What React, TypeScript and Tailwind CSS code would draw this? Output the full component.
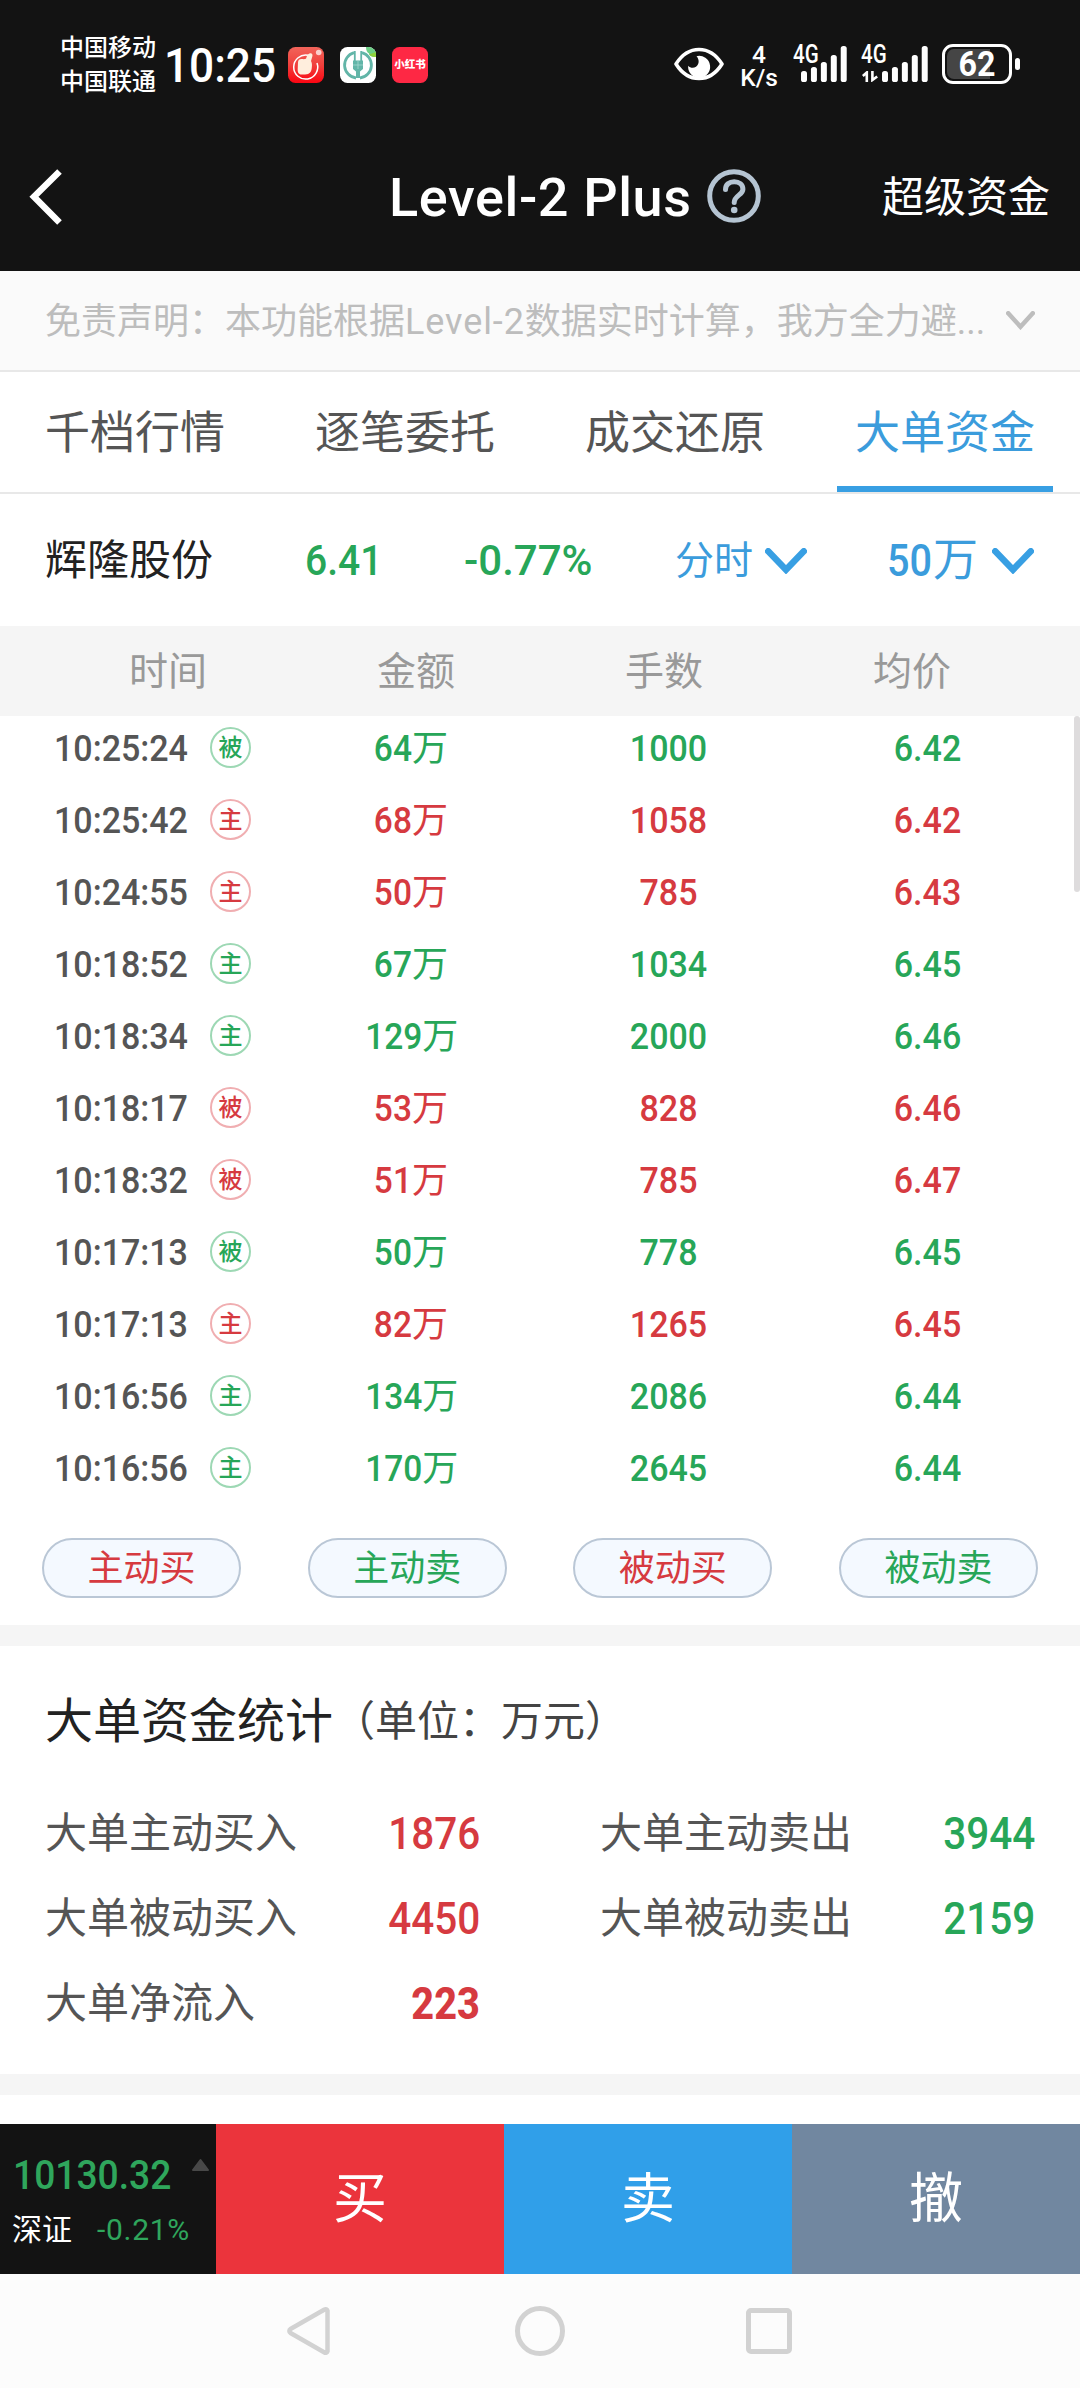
import React from "react";

type Tone = "red" | "green";

const TEXT: Record<Tone, string> = { red: "text-[#d63a40]", green: "text-[#27a658]" };
const RING: Record<Tone, string> = { red: "border-[#f0aeb1]", green: "border-[#9dd8b4]" };

const TRADES: [string, string, string, string, string, Tone][] = [
  ["10:25:24", "被", "64", "1000", "6.42", "green"],
  ["10:25:42", "主", "68", "1058", "6.42", "red"],
  ["10:24:55", "主", "50", "785", "6.43", "red"],
  ["10:18:52", "主", "67", "1034", "6.45", "green"],
  ["10:18:34", "主", "129", "2000", "6.46", "green"],
  ["10:18:17", "被", "53", "828", "6.46", "red"],
  ["10:18:32", "被", "51", "785", "6.47", "red"],
  ["10:17:13", "被", "50", "778", "6.45", "green"],
  ["10:17:13", "主", "82", "1265", "6.45", "red"],
  ["10:16:56", "主", "134", "2086", "6.44", "green"],
  ["10:16:56", "主", "170", "2645", "6.44", "green"],
];

/** Narrow numerals. */
function Num({ children, className = "" }: { children: React.ReactNode; className?: string }) {
  return <span className={`inline-block font-medium ${className}`}>{children}</span>;
}

function Chevron({ w, h, stroke, color }: { w: number; h: number; stroke: number; color: string }) {
  const p = stroke / 2;
  return (
    <svg className="shrink-0" width={w} height={h} viewBox={`0 0 ${w} ${h}`} fill="none" stroke={color} strokeWidth={stroke} strokeLinecap="round">
      <path d={`M${p} ${p} L${w / 2} ${h - p - 1} L${w - p} ${p}`} />
    </svg>
  );
}

const BARS = [11, 15, 20, 27, 36];

function SignalBars() {
  return (
    <svg width="46" height="36" viewBox="0 0 46 36" fill="#fff">
      {BARS.map((h, i) => (
        <rect key={i} x={i * 9.93} y={36 - h} width="6" height={h} rx="2.6" />
      ))}
    </svg>
  );
}

function StatusBar() {
  return (
    <div className="flex h-[126px] items-start text-white">
      <div className="ml-[60px] mt-[31px] w-[97px] shrink-0 text-[24px] leading-[34px] font-medium">
        <div>中国移动</div>
        <div>中国联通</div>
      </div>
      <div className="ml-[7px] mt-[42px] w-[124px] shrink-0 whitespace-nowrap text-[48px] leading-[48px]">
        <span className="inline-block origin-left scale-x-[0.92] font-medium">10:25</span>
      </div>
      <svg className="mt-[47px] shrink-0" width="36" height="36" viewBox="0 0 36 36">
        <defs>
          <linearGradient id="redApp" x1="0" y1="0" x2="0" y2="1">
            <stop offset="0" stopColor="#f2645a" />
            <stop offset="0.5" stopColor="#f0403c" />
            <stop offset="1" stopColor="#fb0512" />
          </linearGradient>
        </defs>
        <rect width="36" height="36" rx="7.5" fill="url(#redApp)" />
        <path d="M20 8.3A12 12 0 1 0 29 16" fill="none" stroke="#fff" strokeWidth="1.5" />
        <path d="M10 15.500c0-3 2-3.800 4-3.500 1.500.2 2.500.2 4-.2 1-3 1.500-5 4-5.500 2-.3 3 1 2.300 3.200l-1.300 4.500c1 2 1.200 4 .8 6.500-.3 4-1.800 7-6.800 7h-3.500C10.500 27.500 9.500 25 9.700 22z" fill="#ffeedd" />
        <circle cx="30.700" cy="5.500" r="2.800" fill="#fbd0cc" />
      </svg>
      <svg className="ml-[16px] mt-[47px] shrink-0" width="36" height="36" viewBox="0 0 36 36">
        <defs>
          <clipPath id="bankClip"><rect width="36" height="36" rx="7.500" /></clipPath>
        </defs>
        <g clipPath="url(#bankClip)">
          <rect width="36" height="36" fill="#fff" />
          <path d="M26 0h10v10c-5 0-6.500-1.500-7-3.500C27 5.500 26 3 26 0z" fill="#6ccf86" />
          <path d="M29 7.500c2 2 4.500 2.500 7 2.500V5z" fill="#8fd13a" />
        </g>
        <path d="M14 5.600A13 13 0 0 0 16 31M22 5.600A13 13 0 0 1 20 31" fill="none" stroke="#62b5a8" strokeWidth="2.800" />
        <path d="M14.800 4v10M21.200 4v10" stroke="#62b5a8" strokeWidth="1.800" />
        <path d="M13 13.500h10V22l-3 2.500v6.500h-4v-6.500L13 22z" fill="#62b5a8" />
        <path d="M18 13v9M13 18h10" stroke="#a5d8d0" strokeWidth="0.800" />
      </svg>
      <div className="ml-[16px] mt-[47px] flex h-[36px] w-[36px] shrink-0 items-center justify-center rounded-[7.5px] bg-[#fe2844] text-white">
        <span className="whitespace-nowrap text-[10.5px] leading-none font-black">小红书</span>
      </div>
      <svg className="ml-[246px] mt-[47px] shrink-0" width="50" height="34" viewBox="0 0 50 34">
        <path d="M2 17C8 7.500 16 2.500 25 2.500S42 7.500 48 17C42 26.500 34 31.500 25 31.500S8 26.500 2 17z" fill="none" stroke="#fff" strokeWidth="3.600" strokeLinejoin="round" />
        <path d="M22.500 9.200a11 11 0 1 1-8.300 9.500c2 2.300 5.300 2.800 7.800 1 3.300-2.400 3.600-7 .5-10.500z" fill="#fff" />
      </svg>
      <p className="ml-[15px] mt-[43px] w-[40px] shrink-0 text-center text-[24.500px] leading-[23px] font-medium">
        4<br />K/s
      </p>
      <div className="relative ml-[14px] mt-[46px] h-[36px] w-[54px] shrink-0">
        <div className="flex justify-end"><SignalBars /></div>
        <span className="absolute left-0 -top-px origin-left scale-x-[0.82] text-[25px] leading-[20px] font-medium">4G</span>
      </div>
      <div className="relative ml-[14px] mt-[46px] h-[36px] w-[67px] shrink-0">
        <div className="flex justify-end"><SignalBars /></div>
        <span className="absolute left-0 -top-px origin-left scale-x-[0.82] text-[25px] leading-[20px] font-medium">4G</span>
        <svg className="absolute bottom-0 left-[1px]" width="16" height="11" viewBox="0 0 16 11" fill="none" stroke="#fff" strokeWidth="2.600">
          <path d="M0.800 5 4.800 1.500V11M10.400 0V9l4.800-3.500" />
        </svg>
      </div>
      <div className="relative ml-[14px] mt-[44px] flex h-[40px] w-[70px] shrink-0 items-center justify-center rounded-[11px] border-[3px] border-white p-[3px]">
        <div className="absolute left-[2px] top-[2px] h-[30px] w-[43px] rounded-l-[7px] bg-[#454545]" />
        <span className="relative scale-x-[0.92] text-[35px] leading-none font-bold">62</span>
      </div>
      <div className="ml-[3px] mt-[58px] h-[12px] w-[5px] shrink-0 rounded-[2.500px] bg-white" />
    </div>
  );
}

function TitleBar() {
  return (
    <div className="flex h-[145px] items-start text-white">
      <svg className="ml-[28px] mt-[43px] shrink-0" width="36" height="56" viewBox="0 0 36 56" fill="none" stroke="#fff" strokeWidth="6.500">
        <path d="M31.500 2.500 6 27.800 31.500 53.500" />
      </svg>
      <h1 className="ml-[325px] mt-[42px] w-[318px] shrink-0 whitespace-nowrap text-[54px] leading-[60px] font-medium tracking-[0.6px]">Level-2 Plus</h1>
      <svg className="mt-[43px] shrink-0" width="54" height="54" viewBox="0 0 54 54" fill="none" stroke="#b5c4d2">
        <circle cx="27" cy="27" r="24.300" strokeWidth="5" />
        <path d="M18.500 20.500c0-5 3.800-7.800 8.700-7.800s8.700 3 8.700 7.500c0 5.800-8.700 6.300-8.700 13.300" strokeWidth="5" strokeLinecap="round" />
        <circle cx="27.200" cy="41" r="3.300" fill="#b5c4d2" stroke="none" />
      </svg>
      <span className="ml-[121px] mt-[42px] whitespace-nowrap text-[42px] leading-[60px]">超级资金</span>
    </div>
  );
}

const TABS = ["千档行情", "逐笔委托", "成交还原", "大单资金"];

function Tabs() {
  return (
    <div className="grid h-[122px] grid-cols-4 border-b-2 border-[#e8e8e8] text-[45px] leading-[60px] text-[#555]">
      {TABS.map((t, i) => (
        <div
          key={t}
          className={
            i === 3
              ? "mx-[27px] flex items-center justify-center border-b-[6px] border-[#389fe3] pt-[10px] text-[#3b9cdc]"
              : "mx-[27px] flex items-center justify-center pt-[4px]"
          }
        >
          <span className="whitespace-nowrap">{t}</span>
        </div>
      ))}
    </div>
  );
}

function StockRow() {
  return (
    <div className="flex h-[132px] items-center whitespace-nowrap pt-[2px] leading-[60px]">
      <span className="ml-[45px] w-[260px] text-[42px] text-[#222]">辉隆股份</span>
      <Num className="w-[159px] origin-left scale-x-[0.93] text-[42px] text-[#27a658]">6.41</Num>
      <Num className="w-[211px] origin-left text-[42px] text-[#27a658]">-0.77%</Num>
      <div className="flex w-[212px] items-center text-[39px] text-[#3b9cdc]">
        <span className="w-[90px]">分时</span>
        <Chevron w={42} h={26} stroke={6.5} color="#389fe3" />
      </div>
      <div className="flex items-center text-[45px] text-[#3b9cdc]">
        <Num className="w-[46px] origin-left scale-x-[0.88]">50</Num>
        <span className="w-[59px]">万</span>
        <Chevron w={42} h={26} stroke={6.5} color="#389fe3" />
      </div>
    </div>
  );
}

function TradeTable() {
  return (
    <section>
      <div className="grid h-[90px] grid-cols-4 items-center bg-[#f5f5f5] px-[44px] pt-[2px] text-center text-[39px] leading-[60px] text-[#999]">
        <span>时间</span>
        <span>金额</span>
        <span>手数</span>
        <span>均价</span>
      </div>
      <div className="relative h-[790px] overflow-hidden">
        <div className="-mt-[3px]">
          {TRADES.map(([time, kind, amount, lots, price, tone], i) => (
            <div
              key={i}
              className={`grid h-[72px] grid-cols-[280px_259px_259px_259px] items-center text-center text-[36px] leading-[50px] ${TEXT[tone]}`}
            >
              <div className="flex items-center pl-[54px] text-[#555]">
                <Num className="w-[156px] origin-left scale-x-[0.945] text-left">{time}</Num>
                <span className={`mb-[3px] flex h-[41px] w-[41px] shrink-0 items-center justify-center rounded-full border-2 pt-px text-[24px] leading-none font-medium ${RING[tone]} ${TEXT[tone]}`}>
                  {kind}
                </span>
              </div>
              <div className="flex justify-center">
                <Num className="origin-right scale-x-[0.93]">{amount}</Num>
                <span>万</span>
              </div>
              <Num className="scale-x-[0.945]">{lots}</Num>
              <Num className="scale-x-[0.945]">{price}</Num>
            </div>
          ))}
        </div>
        <div className="absolute right-0 top-0 h-[176px] w-[6px] rounded-[3px] bg-[#dedcdd]" />
      </div>
    </section>
  );
}

const FILTERS: [string, Tone][] = [["主动买", "red"], ["主动卖", "green"], ["被动买", "red"], ["被动卖", "green"]];

function Filters() {
  return (
    <div className="flex h-[119px] items-start justify-between px-[42px] pt-[32px]">
      {FILTERS.map(([label, tone]) => (
        <button
          key={label}
          className={`flex h-[60px] w-[199px] items-center justify-center rounded-full border-2 border-[#bac7d6] bg-[#f4f9ff] pt-px text-[36px] leading-[54px] ${TEXT[tone]}`}
        >
          {label}
        </button>
      ))}
    </div>
  );
}

const STATS: [string, string, Tone, boolean][] = [
  ["大单主动买入", "1876", "red", false],
  ["大单主动卖出", "3944", "green", false],
  ["大单被动买入", "4450", "red", false],
  ["大单被动卖出", "2159", "green", false],
  ["大单净流入", "223", "red", true],
];

function Summary() {
  return (
    <section className="h-[428px] px-[45px] pt-[46px]">
      <h2 className="flex items-center whitespace-nowrap leading-[60px]">
        <span className="text-[48px] text-[#222]">大单资金统计</span>
        <span className="text-[42px] text-[#444]">（单位：万元）</span>
      </h2>
      <div className="mt-[39px] grid grid-cols-[435px_435px] gap-x-[120px]">
        {STATS.map(([label, value, tone, bold]) => (
          <div key={label} className="flex h-[85px] items-center justify-between">
            <span className="text-[42px] leading-[60px] text-[#555]">{label}</span>
            {bold ? (
              <span className={`origin-right scale-x-[0.88] text-[45px] leading-[60px] font-extrabold ${TEXT[tone]}`}>{value}</span>
            ) : (
              <Num className={`origin-right scale-x-[0.9] text-[45px] leading-[60px] ${TEXT[tone]}`}>{value}</Num>
            )}
          </div>
        ))}
      </div>
    </section>
  );
}

function TradeBar() {
  return (
    <div className="flex h-[150px] text-white">
      <div className="flex w-[216px] flex-col bg-[#131313] pt-[32px]">
        <div className="flex items-start pl-[13px]">
          <span className="w-[178px] origin-left scale-x-[0.93] text-[40px] leading-[40px] font-medium text-[#2fa65c]">10130.32</span>
          <svg className="mt-px" width="19" height="16" viewBox="0 0 19 16">
            <path d="M9.500 3 17 13H2z" fill="#484848" stroke="#484848" strokeWidth="2" strokeLinejoin="round" />
          </svg>
        </div>
        <div className="mt-[14px] flex items-center pl-[12px] leading-[40px]">
          <span className="w-[85px] text-[30px]">深证</span>
          <span className="origin-left text-[30px] tracking-[0.7px] text-[#2fa65c]">-0.21%</span>
        </div>
      </div>
      <button className="flex w-[288px] items-center justify-center bg-[#eb343c] pt-[2px] text-[54px] leading-[80px]">买</button>
      <button className="flex w-[288px] items-center justify-center bg-[#309fe9] pt-[2px] text-[54px] leading-[80px]">卖</button>
      <button className="flex w-[288px] items-center justify-center bg-[#7187a0] pt-[2px] text-[54px] leading-[80px]">撤</button>
    </div>
  );
}

function NavBar() {
  return (
    <div className="flex h-[114px] items-start bg-[#fcfcfc] pt-[32px]">
      <svg className="ml-[286px] shrink-0" width="45" height="50" viewBox="0 0 45 50" fill="none" stroke="#d2d2d2" strokeWidth="4.500" strokeLinejoin="round">
        <path d="M41.500 4.800v40.400a2 2 0 0 1-3 1.300L4.500 27a2.300 2.300 0 0 1 0-4L38.500 3.500a2 2 0 0 1 3 1.300z" />
      </svg>
      <div className="ml-[184px] h-[50px] w-[50px] shrink-0 rounded-full border-[5px] border-[#d2d2d2]" />
      <div className="ml-[181px] mt-[2px] h-[46px] w-[46px] shrink-0 rounded-[5px] border-[5px] border-[#d2d2d2]" />
    </div>
  );
}

export default function App() {
  return (
    <div className="flex h-[2388px] w-[1080px] flex-col overflow-hidden bg-white font-[Roboto,'Noto_Sans_CJK_SC',sans-serif]">
      <header className="h-[271px] shrink-0 bg-[#131313]">
        <StatusBar />
        <TitleBar />
      </header>
      <div className="flex h-[101px] shrink-0 items-center border-b-2 border-[#e8e8e8] bg-[#fafafa] text-[36px] leading-[60px] text-[#bdbdbd]">
        <p className="ml-[45px] w-[961px] whitespace-nowrap pt-[2px]">
          免责声明：本功能根据<span className="tracking-[0.9px]">Level-2</span>数据实时计算，我方全力避...
        </p>
        <Chevron w={29} h={19} stroke={4.5} color="#bdbdbd" />
      </div>
      <Tabs />
      <StockRow />
      <TradeTable />
      <Filters />
      <div className="h-[21px] shrink-0 bg-[#f5f5f5]" />
      <Summary />
      <div className="h-[21px] shrink-0 bg-[#f5f5f5]" />
      <div className="h-[29px] shrink-0" />
      <TradeBar />
      <NavBar />
    </div>
  );
}
